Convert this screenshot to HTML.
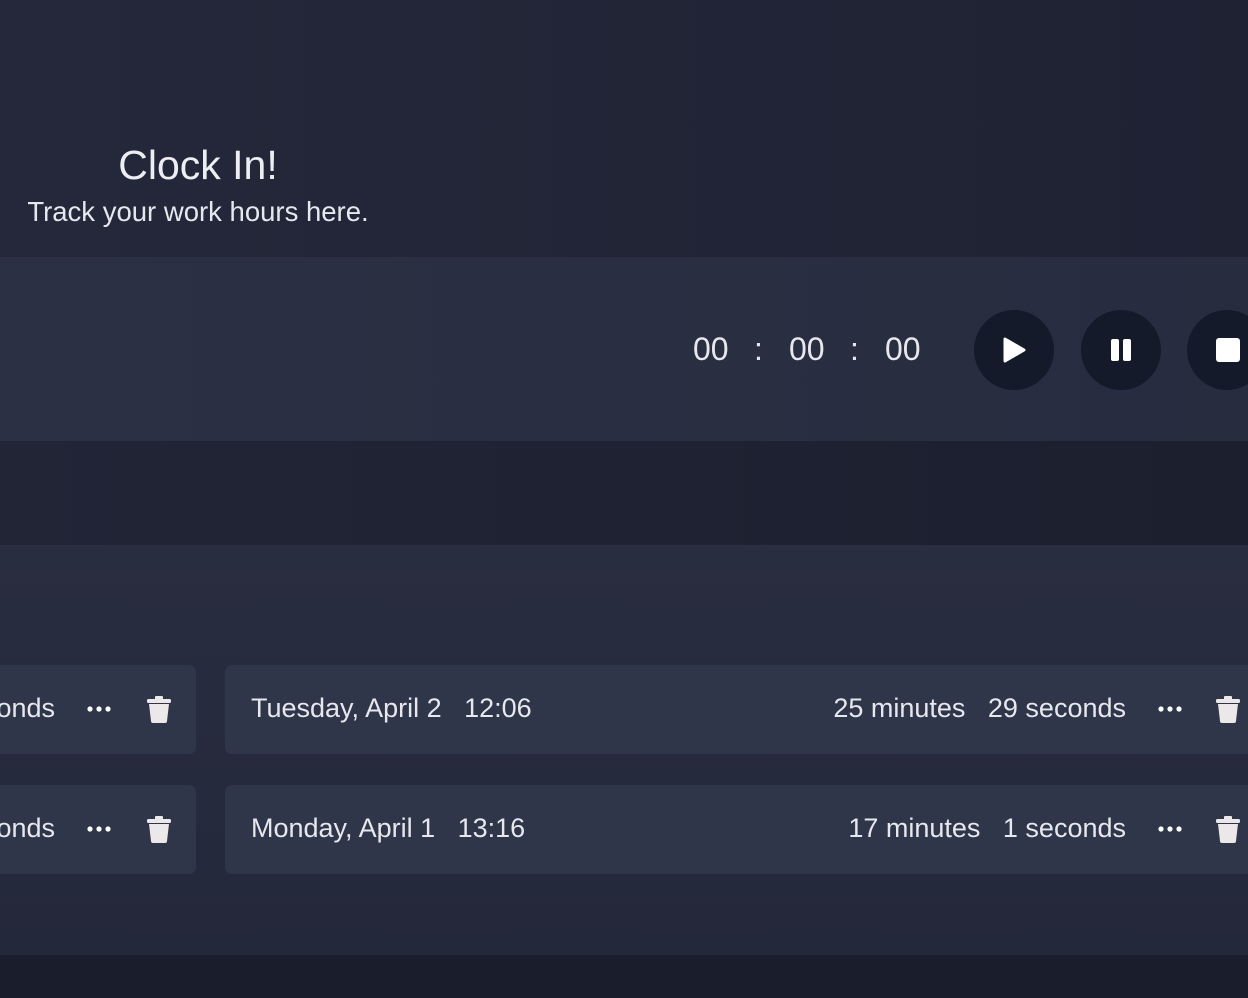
<!DOCTYPE html>
<html><head><meta charset="utf-8"><style>
*{margin:0;padding:0;box-sizing:border-box}
body{width:1248px;height:998px;overflow:hidden;background:#1b1e2c;font-family:"Liberation Sans",sans-serif;color:#e6e8ee;position:relative}
.top{position:absolute;left:0;top:0;width:1248px;height:257px;background:linear-gradient(90deg,#24283a,#1f2233)}
.band{position:absolute;left:0;top:257px;width:1248px;height:184px;background:linear-gradient(90deg,#2b3044,#282c3f)}
.mid{position:absolute;left:0;top:441px;width:1248px;height:104px;background:linear-gradient(90deg,#212536,#1c1f2e)}
.list{position:absolute;left:0;top:545px;width:1248px;height:410px;background:linear-gradient(180deg,#282d3f,#23283a)}
.bot{position:absolute;left:0;top:955px;width:1248px;height:43px;background:#1a1d2b}
h1{position:absolute;left:0;width:396px;top:142px;text-align:center;font-weight:400;font-size:41px;color:#eceef2}
.sub{position:absolute;left:0;width:396px;top:196px;text-align:center;font-size:27.5px;color:#e6e8ee}
.timer{position:absolute;top:331px;font-size:32px;color:#e6e8ee}
.btn{position:absolute;top:310px;width:80px;height:80px;border-radius:50%;background:#141a2a;display:flex;align-items:center;justify-content:center}
.card{position:absolute;height:89px;border-radius:7px;background:#30364a;font-size:27px}
.card span{position:absolute;top:28px;white-space:nowrap}
.dots{position:absolute;top:40px;width:24px;height:8px}
.trash{position:absolute;top:31px}
</style></head><body>
<div class="top"></div><div class="band"></div><div class="mid"></div><div class="list"></div><div class="bot"></div>
<h1>Clock In!</h1>
<div class="sub">Track your work hours here.</div>
<div class="timer" style="left:693px">00</div>
<div class="timer" style="left:754px">:</div>
<div class="timer" style="left:789px">00</div>
<div class="timer" style="left:850px">:</div>
<div class="timer" style="left:885px">00</div>
<div class="btn" style="left:974px"><svg width="26" height="28" viewBox="0 0 26 28"><path d="M4 3 L23 14 L4 25 Z" fill="#fff" stroke="#fff" stroke-width="3" stroke-linejoin="round"/></svg></div>
<div class="btn" style="left:1081px"><svg width="24" height="26"><rect x="2" y="2" width="8" height="22" rx="2" fill="#fff"/><rect x="14" y="2" width="8" height="22" rx="2" fill="#fff"/></svg></div>
<div class="btn" style="left:1187px;justify-content:flex-start;padding-left:29px"><svg width="24" height="24"><rect x="0" y="0" width="24" height="24" rx="3" fill="#fff"/></svg></div>

<div class="card" style="left:-20px;top:665px;width:216px"><span style="right:141px">seconds</span><svg class="dots" style="left:107px" viewBox="0 0 24 8"><circle cx="3" cy="4" r="2.6" fill="#fff"/><circle cx="12" cy="4" r="2.6" fill="#fff"/><circle cx="21" cy="4" r="2.6" fill="#fff"/></svg><svg class="trash" style="left:167px" width="24" height="27" viewBox="0 0 24 27"><rect x="0" y="3" width="24" height="4" rx="1.5" fill="#ece8ea"/><rect x="8" y="0" width="8" height="4" rx="1" fill="#ece8ea"/><path d="M2 8 H22 L20 25 Q20 27 18 27 H6 Q4 27 4 25 Z" fill="#ece8ea"/></svg></div>
<div class="card" style="left:-20px;top:785px;width:216px"><span style="right:141px">seconds</span><svg class="dots" style="left:107px" viewBox="0 0 24 8"><circle cx="3" cy="4" r="2.6" fill="#fff"/><circle cx="12" cy="4" r="2.6" fill="#fff"/><circle cx="21" cy="4" r="2.6" fill="#fff"/></svg><svg class="trash" style="left:167px" width="24" height="27" viewBox="0 0 24 27"><rect x="0" y="3" width="24" height="4" rx="1.5" fill="#ece8ea"/><rect x="8" y="0" width="8" height="4" rx="1" fill="#ece8ea"/><path d="M2 8 H22 L20 25 Q20 27 18 27 H6 Q4 27 4 25 Z" fill="#ece8ea"/></svg></div>

<div class="card" style="left:225px;top:665px;width:1050px"><span style="left:26px">Tuesday, April 2&nbsp;&nbsp;&nbsp;12:06</span><span style="right:149px">25 minutes&nbsp;&nbsp;&nbsp;29 seconds</span><svg class="dots" style="left:933px" viewBox="0 0 24 8"><circle cx="3" cy="4" r="2.6" fill="#fff"/><circle cx="12" cy="4" r="2.6" fill="#fff"/><circle cx="21" cy="4" r="2.6" fill="#fff"/></svg><svg class="trash" style="left:991px" width="24" height="27" viewBox="0 0 24 27"><rect x="0" y="3" width="24" height="4" rx="1.5" fill="#ece8ea"/><rect x="8" y="0" width="8" height="4" rx="1" fill="#ece8ea"/><path d="M2 8 H22 L20 25 Q20 27 18 27 H6 Q4 27 4 25 Z" fill="#ece8ea"/></svg></div>
<div class="card" style="left:225px;top:785px;width:1050px"><span style="left:26px">Monday, April 1&nbsp;&nbsp;&nbsp;13:16</span><span style="right:149px">17 minutes&nbsp;&nbsp;&nbsp;1 seconds</span><svg class="dots" style="left:933px" viewBox="0 0 24 8"><circle cx="3" cy="4" r="2.6" fill="#fff"/><circle cx="12" cy="4" r="2.6" fill="#fff"/><circle cx="21" cy="4" r="2.6" fill="#fff"/></svg><svg class="trash" style="left:991px" width="24" height="27" viewBox="0 0 24 27"><rect x="0" y="3" width="24" height="4" rx="1.5" fill="#ece8ea"/><rect x="8" y="0" width="8" height="4" rx="1" fill="#ece8ea"/><path d="M2 8 H22 L20 25 Q20 27 18 27 H6 Q4 27 4 25 Z" fill="#ece8ea"/></svg></div>
</body></html>
